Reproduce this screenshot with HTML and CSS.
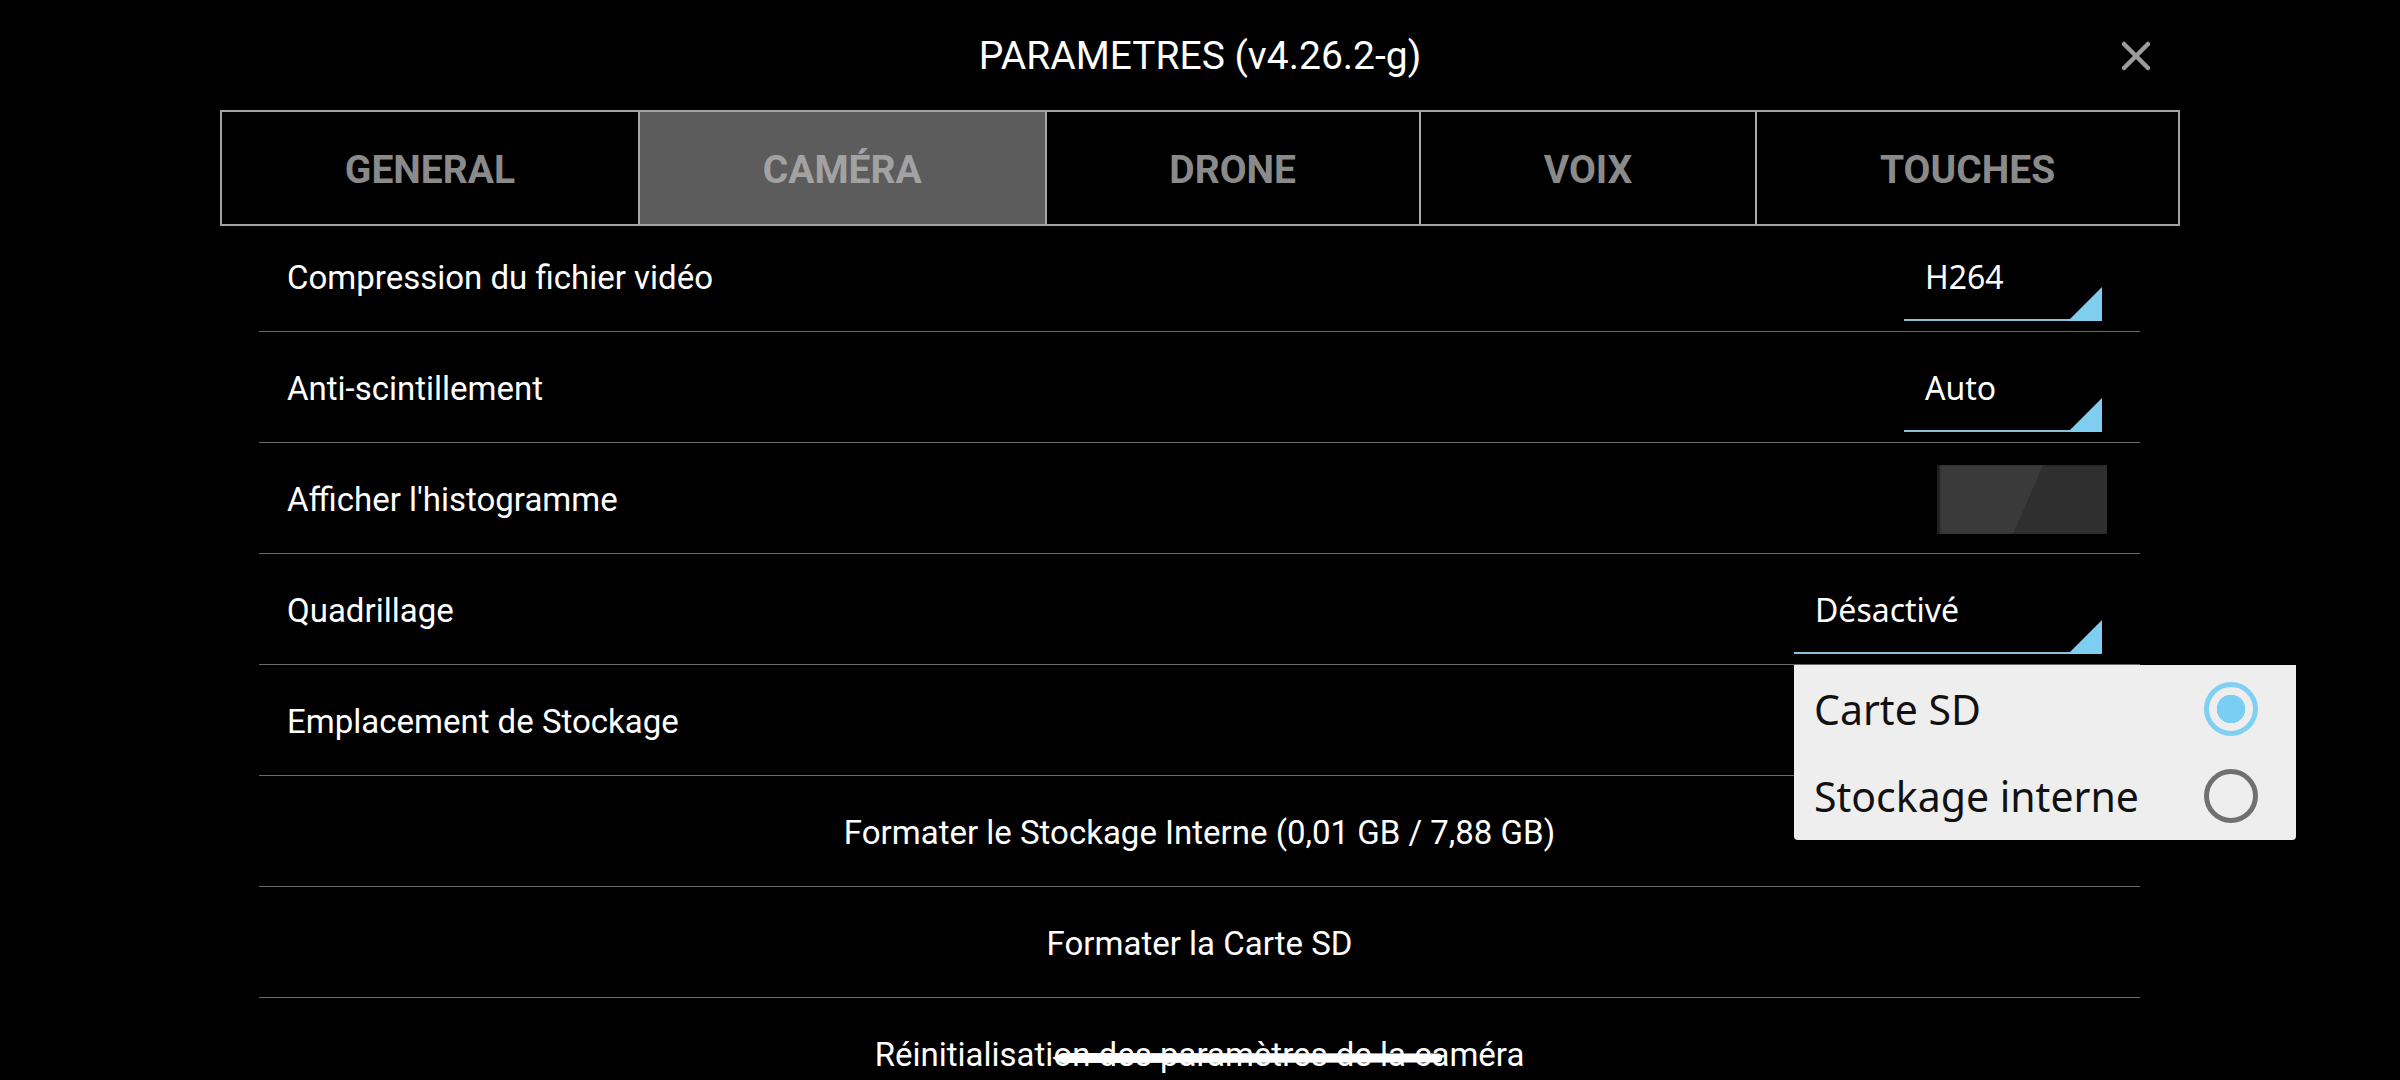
FILE: index.html
```html
<!DOCTYPE html>
<html lang="fr">
<head>
<meta charset="utf-8">
<title>Paramètres</title>
<link rel="stylesheet" href="styles.css">
</head>
<body>
<div class="screen">
  <header class="topbar">
    <div class="topbar-spacer"></div>
    <h1 class="title">PARAMETRES (v4.26.2-g)</h1>
    <div class="close" aria-label="Fermer">
      <svg width="32" height="32" viewBox="0 0 32 32"><path d="M4 4 L28 28 M28 4 L4 28" stroke="#9c9c9c" stroke-width="4.5" stroke-linecap="round" fill="none"/></svg>
    </div>
  </header>

  <nav class="tabs">
    <div class="tab">GENERAL</div>
    <div class="tab active">CAMÉRA</div>
    <div class="tab">DRONE</div>
    <div class="tab">VOIX</div>
    <div class="tab">TOUCHES</div>
  </nav>

  <div class="list-viewport">
    <ul class="list">
      <li class="row">
        <span class="label">Compression du fichier vidéo</span>
        <div class="spinner spinner-sm"><span class="spinner-value">H264</span></div>
      </li>
      <li class="row">
        <span class="label">Anti-scintillement</span>
        <div class="spinner spinner-sm"><span class="spinner-value">Auto</span></div>
      </li>
      <li class="row">
        <span class="label">Afficher l'histogramme</span>
        <div class="toggle"></div>
      </li>
      <li class="row">
        <span class="label">Quadrillage</span>
        <div class="spinner spinner-lg"><span class="spinner-value">Désactivé</span></div>
      </li>
      <li class="row">
        <span class="label">Emplacement de Stockage</span>
      </li>
      <li class="row action">Formater le Stockage Interne (0,01 GB / 7,88 GB)</li>
      <li class="row action">Formater la Carte SD</li>
      <li class="row action">Réinitialisation des paramètres de la caméra</li>
    </ul>
  </div>

  <div class="popup">
    <div class="popup-item">
      <span class="popup-text">Carte SD</span>
      <span class="radio checked"></span>
    </div>
    <div class="popup-item">
      <span class="popup-text">Stockage interne</span>
      <span class="radio"></span>
    </div>
  </div>

  <svg class="scribble" width="392" height="12" viewBox="0 0 392 12">
    <path d="M0 6 L10 1 L386 1.5 A4.5 4.5 0 0 1 386 10.5 L10 11 Z" fill="#ffffff"/>
  </svg>
</div>
</body>
</html>
```

FILE: styles.css
```css
* {
  box-sizing: border-box;
}

html, body {
  margin: 0;
  padding: 0;
  background: #000;
}

body {
  font-family: Roboto, "Noto Sans", "Liberation Sans", sans-serif;
  color: #fff;
}

.screen {
  position: relative;
  width: 2400px;
  height: 1080px;
  overflow: hidden;
  background: #000;
  display: flex;
  flex-direction: column;
}

/* ---------- top bar ---------- */
.topbar {
  height: 110px;
  flex: none;
  display: grid;
  grid-template-columns: 1fr auto 1fr;
  align-items: center;
}

.title {
  margin: 0;
  font-size: 39px;
  font-weight: 400;
  color: #fff;
  line-height: 1;
  padding-top: 2px;
}

.close {
  justify-self: end;
  margin-right: 248px;
  width: 32px;
  height: 32px;
  margin-top: 2px;
}

.close svg {
  display: block;
}

/* ---------- tabs ---------- */
.tabs {
  flex: none;
  height: 116px;
  margin: 0 220px;
  border: 2px solid #a3a3a3;
  display: flex;
}

.tab {
  flex: 1 1 auto;
  display: flex;
  align-items: center;
  justify-content: center;
  padding-top: 3px;
  font-size: 39px;
  font-weight: 700;
  color: #8a8a8a;
  white-space: nowrap;
}

.tab + .tab {
  border-left: 2px solid #a8a8a8;
}

.tab.active {
  background: #5c5c5c;
  color: #a2a2a2;
}

/* ---------- list ---------- */
.list-viewport {
  flex: 1;
  overflow: hidden;
  margin: 0 260px 0 259px;
}

.list {
  list-style: none;
  margin: -5px 0 0 0;
  padding: 0;
}

.row {
  height: 111px;
  border-bottom: 1px solid #6a6a6a;
  display: flex;
  align-items: center;
  justify-content: space-between;
  padding: 2px 33px 0 28px;
  font-size: 33px;
  color: #fff;
}

.row.action {
  justify-content: center;
  padding: 2px 0 0 0;
}

.label {
  white-space: nowrap;
}

/* spinner (dropdown) */
.spinner {
  position: relative;
  align-self: flex-end;
  margin: 0 5px 10px 0;
  height: 88px;
  display: flex;
  align-items: center;
  padding-left: 21px;
  border-bottom: 2px solid #8cc0da;
}

.spinner::after {
  content: "";
  position: absolute;
  right: 0;
  bottom: -2px;
  width: 34px;
  height: 34px;
  background: #7fcdef;
  clip-path: polygon(100% 0, 100% 100%, 0 100%);
}

.spinner-sm {
  width: 198px;
}

.spinner-lg {
  width: 308px;
}

.spinner-value {
  font-family: "Noto Sans", "Open Sans", Roboto, sans-serif;
  font-size: 32px;
  color: #fff;
  white-space: nowrap;
}

/* toggle */
.toggle {
  width: 170px;
  height: 69px;
  background: linear-gradient(113.5deg, #3a3a3a 53%, #2f2f2f 53%);
  box-shadow: inset 3px 0 2px rgba(0, 0, 0, 0.45);
}

/* ---------- popup ---------- */
.popup {
  position: absolute;
  left: 1794px;
  top: 665px;
  width: 502px;
  height: 175px;
  background: #eeeeee;
  border-radius: 0 0 4px 4px;
  display: flex;
  flex-direction: column;
}

.popup-item {
  flex: 1;
  display: flex;
  align-items: center;
  justify-content: space-between;
  padding: 0 38px 0 20px;
}

.popup-text {
  font-family: "Noto Sans", "Open Sans", Roboto, sans-serif;
  font-size: 41px;
  color: #111;
  white-space: nowrap;
}

.radio {
  width: 54px;
  height: 54px;
  border-radius: 50%;
  border: 5px solid #707070;
  flex: none;
}

.radio.checked {
  border-color: #80d0f4;
  background: radial-gradient(circle, #7acdf3 0 14px, transparent 14.5px);
}

/* ---------- scribble ---------- */
.scribble {
  position: absolute;
  left: 1052px;
  top: 1052px;
}
```
